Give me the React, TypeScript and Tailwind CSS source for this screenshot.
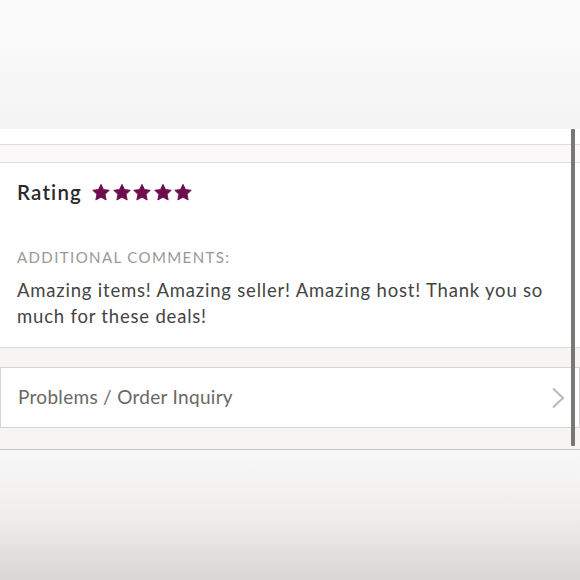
import React from "react";

const Star = () => (
  <svg width="18" height="17" viewBox="0 0 24 23" className="block">
    <path
      d="M12 0.5l3.4 7 7.8 1-5.7 5.4 1.5 7.7L12 17.8l-7 3.8 1.5-7.7L.8 8.5l7.8-1z"
      fill="#6e0c4f"
      stroke="#6e0c4f"
      strokeWidth="1.2"
      strokeLinejoin="round"
    />
  </svg>
);

export default function App() {
  return (
    <div
      className="w-[580px] h-[580px] overflow-hidden relative flex flex-col bg-[#f6f5f5]"
      style={{ fontFamily: "Lato, 'Open Sans', sans-serif" }}
    >
      <div className="h-[129px] shrink-0 bg-gradient-to-b from-[#fdfcfc] to-[#f5f4f4]" />
      <div className="shrink-0 bg-white">
        <div className="h-[15px]" />
        <div className="h-[19px] bg-[#faf8f8] border-y border-[#e0dddb]" />
        <div className="px-[17px] pt-[15px] pb-[18px] border-b border-[#dedbd9]">
          <div className="flex items-center gap-[10px] h-[28px]">
            <span className="text-[20.5px] font-semibold text-[#2a2a2a] leading-[28px] tracking-[1.2px]">
              Rating
            </span>
            <div className="flex gap-[2.5px]">
              <Star />
              <Star />
              <Star />
              <Star />
              <Star />
            </div>
          </div>
          <div className="mt-[41px] text-[15px] text-[#9a9795] tracking-[1.4px] leading-[20px]">
            ADDITIONAL COMMENTS:
          </div>
          <div className="mt-[10px] text-[18.5px] text-[#444] leading-[26px] tracking-[0.8px] pr-[18px]">
            Amazing items! Amazing seller! Amazing host! Thank you so much for these deals!
          </div>
        </div>
        <div className="bg-[#f7f5f4] pt-[19px] pb-[21px] border-b border-[#c9c7c5]">
          <div className="h-[61px] bg-white border border-[#d6d3d1] flex items-center justify-between pl-[17px] pr-[14px]">
            <span className="text-[19px] text-[#6a6866] tracking-[0.3px]">Problems / Order Inquiry</span>
            <svg width="14" height="22" viewBox="0 0 14 22">
              <path d="M2 1.5l10 9.5-10 9.5" fill="none" stroke="#bdbbb9" strokeWidth="2.2" />
            </svg>
          </div>
        </div>
      </div>
      <div className="flex-1 bg-gradient-to-b from-[#f9f8f8] via-[#efeeed] to-[#d8d7d5]" />
      <div className="absolute left-[571px] top-[129px] w-[4px] h-[317px] bg-[#7a7877] rounded-[1px]" />
    </div>
  );
}
